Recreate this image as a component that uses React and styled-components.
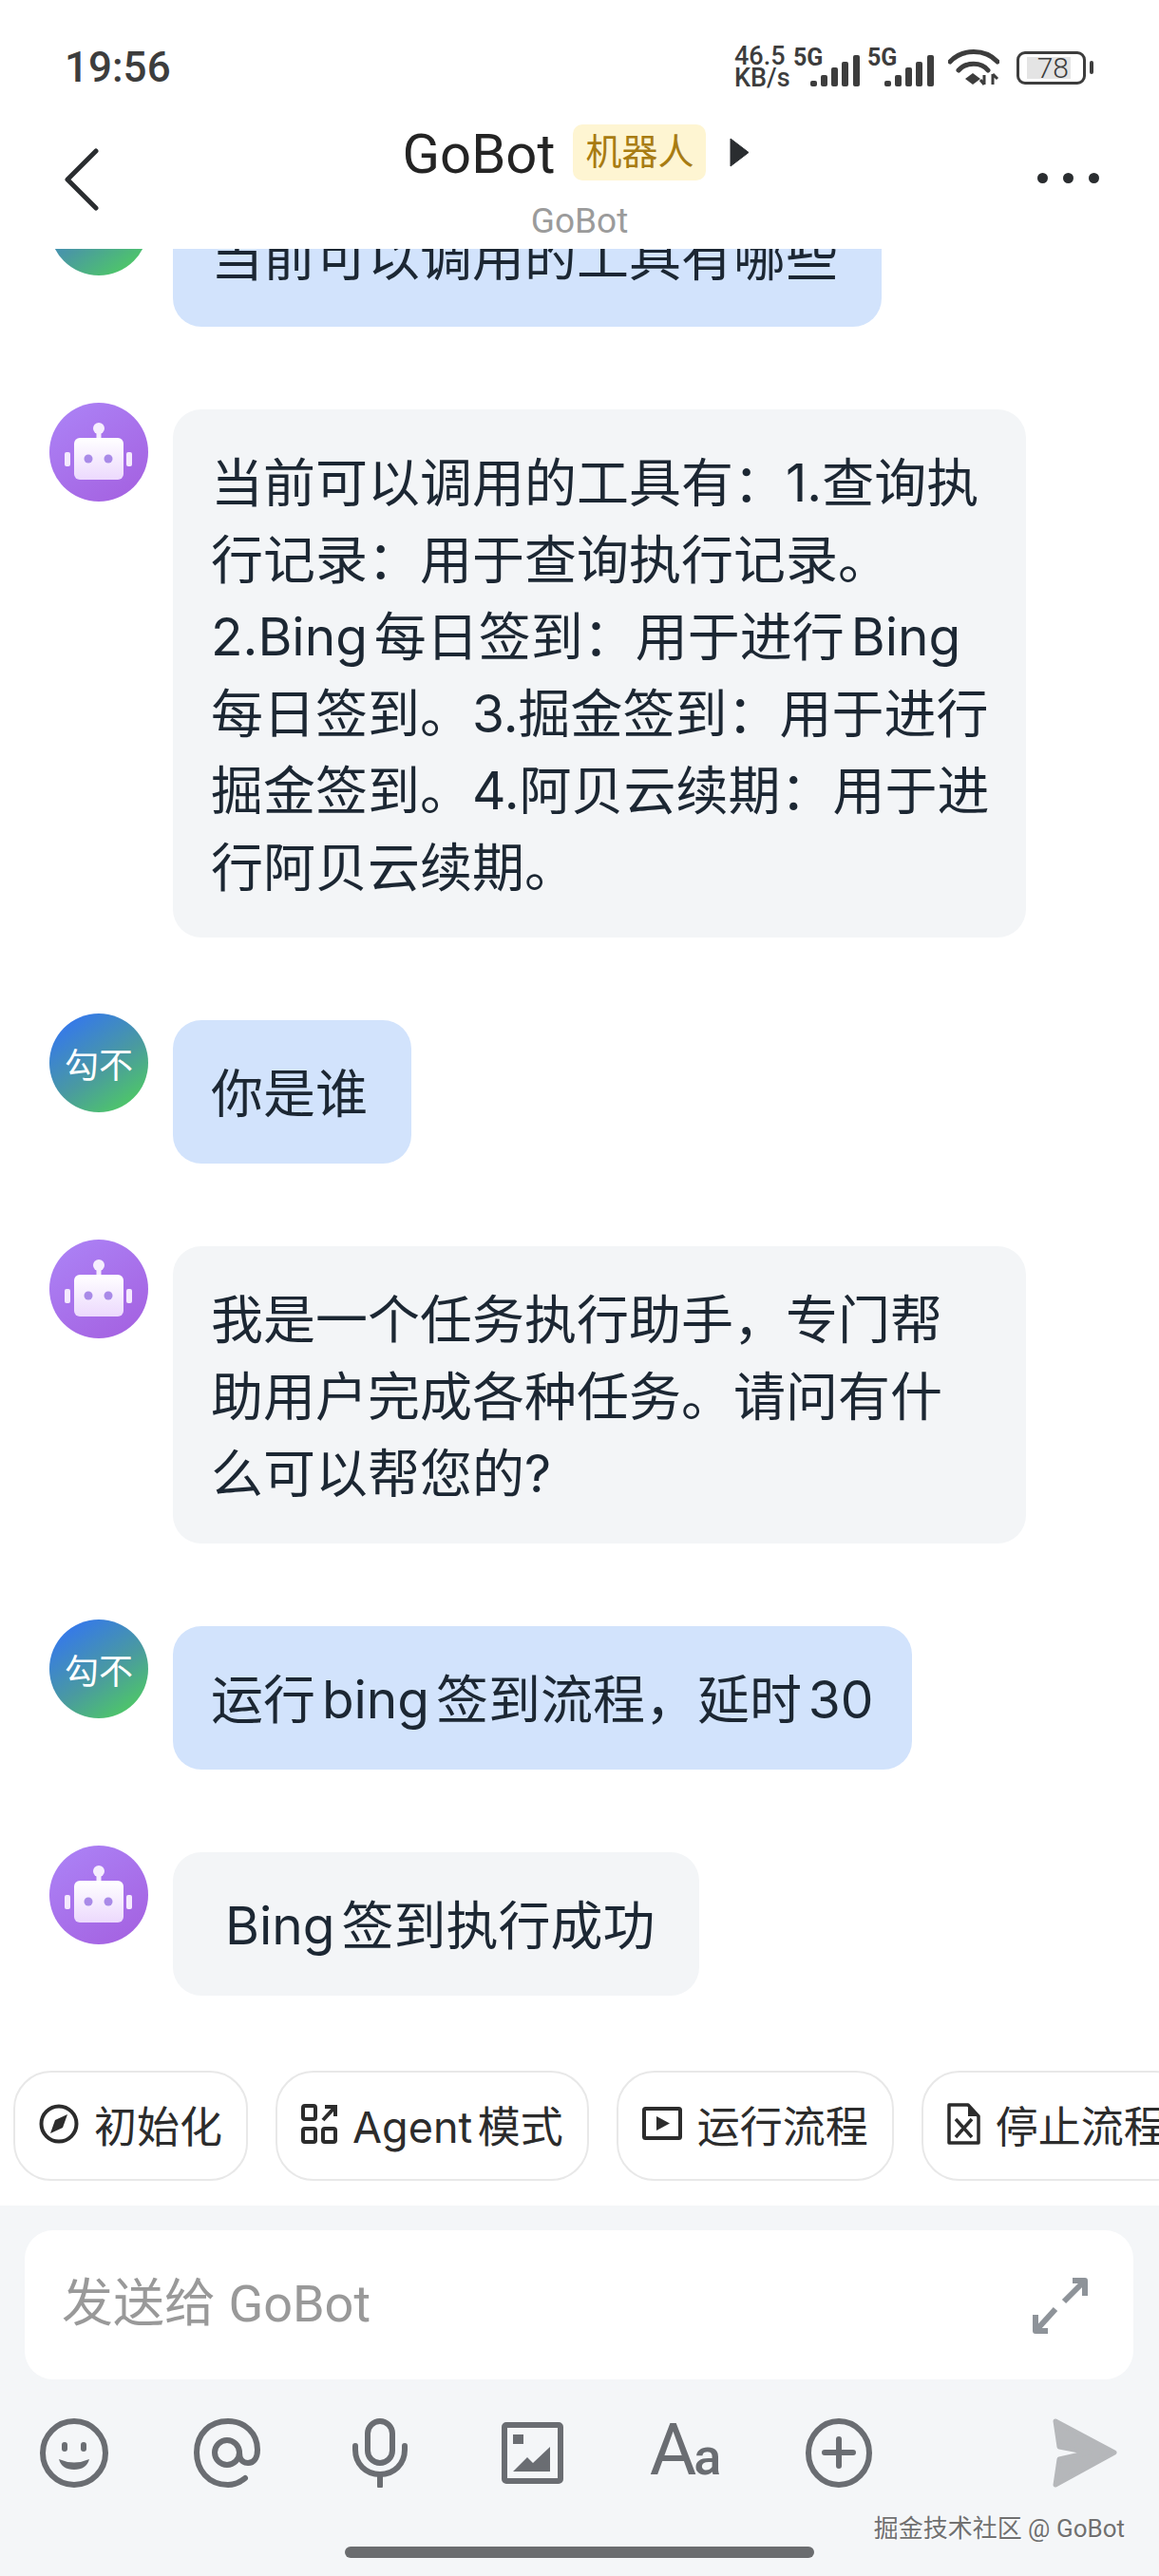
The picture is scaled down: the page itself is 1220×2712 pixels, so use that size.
import React from "react";
import styled, { createGlobalStyle } from "styled-components";

const GlobalStyle = createGlobalStyle`
  html, body {
    margin: 0;
    padding: 0;
    background: #fff;
  }
  * {
    box-sizing: border-box;
  }
`;

const FONT = `Roboto, "Noto Sans CJK SC", sans-serif`;
const BODY_FONT = `Inter, "Noto Sans CJK SC", sans-serif`;

const Page = styled.div`
  width: 1220px;
  height: 2712px;
  display: flex;
  flex-direction: column;
  position: relative;
  overflow: hidden;
  background: #fff;
  font-family: ${FONT};
  text-autospace: normal;
`;

const StatusBar = styled.div`
  height: 110px;
  flex: none;
  padding: 32px 69px 0 68px;
  display: flex;
  align-items: center;
  justify-content: space-between;
  color: #3d3d3d;
`;

const Time = styled.div`
  font-size: 44px;
  font-weight: 500;
  line-height: 50px;
`;

const StatusIcons = styled.div`
  display: flex;
  align-items: center;
`;

const Speed = styled.div`
  width: 62px;
  font-size: 27px;
  font-weight: 500;
  line-height: 23px;
`;

const Signal = styled.div`
  position: relative;
  width: 70px;
  height: 40px;
  margin-right: 8px;
  display: flex;
  justify-content: flex-end;
  align-items: flex-end;
`;

const SignalLabel = styled.span`
  position: absolute;
  left: 0;
  top: -3px;
  font-size: 25px;
  font-weight: 700;
  line-height: 25px;
`;

const WifiIcon = styled.svg`
  margin: 0 18px 0 7px;
`;

const Battery = styled.div`
  width: 73px;
  height: 35px;
  padding: 3px 8px;
  border: 3px solid #3d3d3d;
  border-radius: 9px;
  display: flex;
`;

const BatteryLevel = styled.div`
  width: 46px;
  padding-right: 2px;
  background: #e4e4e4;
  font-size: 30px;
  line-height: 24px;
  font-weight: 300;
  text-align: right;
`;

const BatteryNub = styled.div`
  width: 4px;
  height: 14px;
  margin-left: 4px;
  border-radius: 2px;
  background: #3d3d3d;
`;

const NavBar = styled.div`
  height: 152px;
  flex: none;
  display: grid;
  grid-template-columns: 1fr auto 1fr;
  align-items: start;
  padding: 0 63px;
  background: #fff;
`;

const BackIcon = styled.svg`
  margin: 46px 0 0 5px;
`;

const TitleBlock = styled.div`
  padding-top: 21px;
  display: flex;
  flex-direction: column;
  align-items: center;
`;

const TitleRow = styled.div`
  height: 59px;
  padding-right: 8px;
  display: flex;
  align-items: center;
`;

const TitleName = styled.div`
  font-size: 58px;
  line-height: 59px;
  padding-top: 3px;
  color: #242424;
  margin-right: 19px;
`;

const RobotBadge = styled.div`
  width: 140px;
  height: 59px;
  border-radius: 10px;
  background: #fef5d2;
  color: #a87c12;
  font-size: 38px;
  line-height: 59px;
  text-align: center;
`;

const TitleArrow = styled.svg`
  margin-left: 25px;
`;

const SubTitle = styled.div`
  margin-top: 25px;
  font-size: 37px;
  line-height: 36px;
  color: #9b9b9b;
`;

const MoreDots = styled.div`
  justify-self: end;
  margin-top: 72px;
  display: flex;
  gap: 16px;
`;

const Dot = styled.span`
  width: 11px;
  height: 11px;
  border-radius: 50%;
  background: #2a2d30;
`;

const ChatList = styled.div`
  flex: 1;
  min-height: 0;
  overflow: hidden;
  display: flex;
  flex-direction: column;
  justify-content: flex-end;
  gap: 80px;
  padding: 0 0 79px 52px;
`;

const Message = styled.div`
  flex: none;
  display: flex;
  align-items: flex-start;
  gap: 26px;
`;

const Avatar = styled.div`
  width: 104px;
  height: 104px;
  flex: none;
  border-radius: 50%;
  display: flex;
  align-items: center;
  justify-content: center;
  color: #fff;
  font-size: 36px;
  background: ${(p) =>
    p.$bot
      ? "linear-gradient(145deg, #ac84f7, #a45fdf)"
      : "linear-gradient(145deg, #3477ee 10%, #4a9aa0 55%, #4fd05c 95%)"};
`;

const Bubble = styled.div`
  margin-top: 7px;
  border-radius: 30px;
  padding: 37px ${(p) => p.$right}px 33px ${(p) => p.$left}px;
  width: ${(p) => (p.$long ? "898px" : "auto")};
  font-family: ${BODY_FONT};
  font-size: 55px;
  line-height: 81px;
  color: #1c2733;
  background: ${(p) => (p.$bot ? "#f3f5f7" : "#d2e3fc")};
`;

const ChipRow = styled.div`
  flex: none;
  height: 142px;
  padding-left: 14px;
  display: flex;
  align-items: flex-start;
  gap: 29px;
  overflow: hidden;
`;

const Chip = styled.div`
  flex: none;
  height: 116px;
  padding: 0 25px 4px;
  display: flex;
  align-items: center;
  gap: 16px;
  border: 2px solid #e8e8e8;
  border-radius: 40px;
  background: #fff;
  color: #2c2c2c;
  font-family: ${BODY_FONT};
  font-size: 45px;
  white-space: nowrap;
`;

const Panel = styled.div`
  flex: none;
  height: 390px;
  padding-top: 26px;
  background: #f4f6f8;
  display: flex;
  flex-direction: column;
`;

const InputBox = styled.div`
  height: 157px;
  margin: 0 27px 0 26px;
  padding: 0 48px 0 39px;
  border-radius: 30px;
  background: #fff;
  display: flex;
  align-items: center;
  justify-content: space-between;
`;

const Placeholder = styled.div`
  font-size: 54px;
  margin-bottom: 12px;
  color: #999;
`;

const Toolbar = styled.div`
  margin: 41px 44px 0 -3px;
  height: 73px;
  display: flex;
  align-items: center;
`;

const ToolCell = styled.div`
  width: 161px;
  display: flex;
  justify-content: center;
  align-items: center;
`;

const SendCell = styled.div`
  margin-left: auto;
  display: flex;
`;

const FontTool = styled.div`
  display: flex;
  align-items: baseline;
  color: #6a6d72;
  line-height: 73px;
  font-size: 76px;
`;

const FontToolSmall = styled.span`
  font-size: 54px;
  font-weight: 500;
  margin-left: -3px;
`;

const HomeBar = styled.div`
  width: 494px;
  height: 12px;
  margin: 62px auto 0;
  border-radius: 6px;
  background: #6a6c6f;
`;

const Watermark = styled.div`
  position: absolute;
  right: 36px;
  bottom: 33px;
  font-size: 26px;
  line-height: 34px;
  color: #707070;
  text-shadow: 1px 1px 0 #fff;
`;

const TOOL = "#6a6d72";

function SignalBars() {
  const bars = [
    [0, 6],
    [11, 12],
    [22, 20],
    [33, 26],
    [45, 33],
  ];
  return (
    <svg width="52" height="33" viewBox="0 0 52 33">
      {bars.map(([x, h]) => (
        <rect key={x} x={x} y={33 - h} width="7" height={h} rx="2" fill="#3d3d3d" />
      ))}
    </svg>
  );
}

function Wifi() {
  return (
    <WifiIcon width="54" height="40" viewBox="0 0 54 40" fill="none">
      <path d="M2 14 C15 0 39 0 52 14" stroke="#3d3d3d" strokeWidth="5" strokeLinecap="round" />
      <path d="M11 23 C19 14 35 14 42 23" stroke="#3d3d3d" strokeWidth="5" strokeLinecap="round" />
      <path d="M26 26 L34 32 L26 38 L18 32 Z" fill="#3d3d3d" />
      <path d="M38 28 V38 M34 33 L38 38 M47 38 V27 M47 27 L52 32" stroke="#3d3d3d" strokeWidth="3" />
    </WifiIcon>
  );
}

function RobotFace() {
  return (
    <svg width="104" height="104" viewBox="0 0 104 104">
      <defs>
        <linearGradient id="robotBody" x1="0" y1="0" x2="0" y2="1">
          <stop offset="0" stopColor="#ffffff" />
          <stop offset="1" stopColor="#ecd9fd" />
        </linearGradient>
      </defs>
      <circle cx="52" cy="27" r="6" fill="#f6eefe" />
      <rect x="49.5" y="28" width="5" height="11" fill="#f6eefe" />
      <rect x="26" y="37" width="52" height="44" rx="6" fill="url(#robotBody)" />
      <rect x="16" y="52" width="6" height="15" rx="2" fill="#f4e9fd" />
      <rect x="81" y="52" width="6" height="15" rx="2" fill="#f4e9fd" />
      <circle cx="41" cy="59" r="4.5" fill="#a98ae8" />
      <circle cx="62" cy="59" r="4.5" fill="#a98ae8" />
    </svg>
  );
}

function CompassIcon() {
  return (
    <svg width="42" height="42" viewBox="0 0 42 42" fill="none">
      <circle cx="21" cy="21" r="18.5" stroke="#2c2c2c" strokeWidth="4" />
      <path d="M30 11 L25 25 L12 31 L17 17 Z" fill="#2c2c2c" />
    </svg>
  );
}

function AgentIcon() {
  return (
    <svg width="38" height="44" viewBox="0 0 38 44" fill="none" stroke="#2c2c2c" strokeWidth="4">
      <rect x="2" y="3" width="13" height="14" rx="2" />
      <rect x="2" y="27" width="13" height="14" rx="2" />
      <rect x="23" y="27" width="13" height="14" rx="2" />
      <path d="M23 18 L35 5 M25 4 H36 V14" />
    </svg>
  );
}

function PlayIcon() {
  return (
    <svg width="42" height="36" viewBox="0 0 42 36" fill="none">
      <rect x="2" y="2" width="38" height="31" rx="1.5" stroke="#2c2c2c" strokeWidth="4" />
      <path d="M15 10 L29 17.5 L15 25 Z" fill="#2c2c2c" />
    </svg>
  );
}

function FileXIcon() {
  return (
    <svg width="35" height="44" viewBox="0 0 35 44" fill="none">
      <path d="M2 2 H22 L33 14 V42 H2 Z" stroke="#2c2c2c" strokeWidth="3.5" strokeLinejoin="round" />
      <path d="M22 2 V14 H33 Z" fill="#2c2c2c" />
      <path d="M9 17 L26 36 M26 17 L9 36" stroke="#2c2c2c" strokeWidth="3.5" />
    </svg>
  );
}

function ExpandIcon() {
  return (
    <svg width="58" height="60" viewBox="0 0 58 60" fill="none" stroke="#8e9399" strokeWidth="6" strokeLinejoin="round">
      <path d="M42 4 H55 V20" />
      <path d="M54 5 L33 26" />
      <path d="M3 40 V57 H16" />
      <path d="M4 56 L24 34" />
    </svg>
  );
}

function SmileIcon() {
  return (
    <svg width="72" height="73" viewBox="0 0 72 73" fill="none">
      <ellipse cx="36" cy="36.5" rx="33" ry="33.5" stroke={TOOL} strokeWidth="6" />
      <rect x="23" y="25" width="6" height="10" rx="3" fill={TOOL} />
      <rect x="43" y="25" width="6" height="10" rx="3" fill={TOOL} />
      <path d="M20 43 Q36 50 52 43 Q49 54 36 54 Q23 54 20 43 Z" fill={TOOL} />
    </svg>
  );
}

function AtIcon() {
  return (
    <svg width="70" height="73" viewBox="0 0 70 73" fill="none" stroke={TOOL} strokeWidth="6" strokeLinecap="round">
      <path d="M54 63 C48 68 42 70 36 70 C15 70 3 54 3 36 C3 16 17 3 36 3 C54 3 67 16 67 33 C67 42 63 47 57 47 C51 47 48 43 48 36" />
      <circle cx="35" cy="36" r="13" />
    </svg>
  );
}

function MicIcon() {
  return (
    <svg width="58" height="73" viewBox="0 0 58 73" fill="none" stroke={TOOL} strokeWidth="6" strokeLinecap="round">
      <rect x="16" y="3" width="26" height="44" rx="13" />
      <path d="M3 29 V33 C3 48 14 59 29 59 C44 59 55 48 55 33 V29" />
      <path d="M29 60 V71" />
    </svg>
  );
}

function ImageIcon() {
  return (
    <svg width="65" height="65" viewBox="0 0 65 65" fill="none">
      <rect x="3" y="3" width="59" height="59" rx="2" stroke={TOOL} strokeWidth="6" />
      <rect x="12" y="13" width="11" height="10" fill={TOOL} />
      <path d="M12 52 L27 37 L33 43 L51 26 V52 Z" fill={TOOL} />
    </svg>
  );
}

function PlusIcon() {
  return (
    <svg width="70" height="73" viewBox="0 0 70 73" fill="none" stroke={TOOL} strokeWidth="6" strokeLinecap="round">
      <ellipse cx="35" cy="36.5" rx="32" ry="33.5" />
      <path d="M20 36 H50 M35 22 V50" />
    </svg>
  );
}

function SendIcon() {
  return (
    <svg width="68" height="73" viewBox="0 0 68 73">
      <path
        d="M3 3 L65 36 L3 70 L7 43 L38 36 L7 30 Z"
        fill="#b5b7ba"
        stroke="#b5b7ba"
        strokeWidth="5"
        strokeLinejoin="round"
      />
    </svg>
  );
}

const messages = [
  { id: 1, left: 40, right: 46, text: "当前可以调用的工具有哪些" },
  {
    id: 2,
    bot: true,
    long: true,
    left: 40,
    right: 36,
    text: "当前可以调用的工具有：1.查询执行记录：用于查询执行记录。2.Bing每日签到：用于进行Bing每日签到。3.掘金签到：用于进行掘金签到。4.阿贝云续期：用于进行阿贝云续期。",
  },
  { id: 3, left: 40, right: 46, text: "你是谁" },
  {
    id: 4,
    bot: true,
    long: true,
    left: 40,
    right: 36,
    text: "我是一个任务执行助手，专门帮助用户完成各种任务。请问有什么可以帮您的?",
  },
  { id: 5, left: 40, right: 40, text: "运行bing签到流程，延时30" },
  { id: 6, bot: true, left: 55, right: 47, text: "Bing签到执行成功" },
];

const chips = [
  { label: "初始化", icon: <CompassIcon /> },
  { label: "Agent模式", icon: <AgentIcon /> },
  { label: "运行流程", icon: <PlayIcon /> },
  { label: "停止流程", icon: <FileXIcon /> },
];

const tools = [<SmileIcon />, <AtIcon />, <MicIcon />, <ImageIcon />];

export default function App() {
  return (
    <Page>
      <GlobalStyle />
      <StatusBar>
        <Time>19:56</Time>
        <StatusIcons>
          <Speed>
            46.5
            <br />
            KB/s
          </Speed>
          <Signal>
            <SignalLabel>5G</SignalLabel>
            <SignalBars />
          </Signal>
          <Signal>
            <SignalLabel>5G</SignalLabel>
            <SignalBars />
          </Signal>
          <Wifi />
          <Battery>
            <BatteryLevel>78</BatteryLevel>
          </Battery>
          <BatteryNub />
        </StatusIcons>
      </StatusBar>

      <NavBar>
        <BackIcon width="36" height="66" viewBox="0 0 36 66" fill="none" stroke="#2a2d30" strokeWidth="5" strokeLinecap="round" strokeLinejoin="round">
          <path d="M33 3 L3 33 L33 63" />
        </BackIcon>
        <TitleBlock>
          <TitleRow>
            <TitleName>GoBot</TitleName>
            <RobotBadge>机器人</RobotBadge>
            <TitleArrow width="20" height="31" viewBox="0 0 20 31">
              <path d="M1 1 L20 15.5 L1 30 Z" fill="#2a2d30" stroke="#2a2d30" strokeWidth="1" strokeLinejoin="round" />
            </TitleArrow>
          </TitleRow>
          <SubTitle>GoBot</SubTitle>
        </TitleBlock>
        <MoreDots>
          <Dot />
          <Dot />
          <Dot />
        </MoreDots>
      </NavBar>

      <ChatList>
        {messages.map((m) => (
          <Message key={m.id}>
            <Avatar $bot={m.bot}>{m.bot ? <RobotFace /> : "勾不"}</Avatar>
            <Bubble $bot={m.bot} $long={m.long} $left={m.left} $right={m.right}>
              {m.text}
            </Bubble>
          </Message>
        ))}
      </ChatList>

      <ChipRow>
        {chips.map((c) => (
          <Chip key={c.label}>
            {c.icon}
            <span>{c.label}</span>
          </Chip>
        ))}
      </ChipRow>

      <Panel>
        <InputBox>
          <Placeholder>发送给 GoBot</Placeholder>
          <ExpandIcon />
        </InputBox>
        <Toolbar>
          {tools.map((icon, i) => (
            <ToolCell key={i}>{icon}</ToolCell>
          ))}
          <ToolCell>
            <FontTool>
              A<FontToolSmall>a</FontToolSmall>
            </FontTool>
          </ToolCell>
          <ToolCell>
            <PlusIcon />
          </ToolCell>
          <SendCell>
            <SendIcon />
          </SendCell>
        </Toolbar>
        <HomeBar />
      </Panel>

      <Watermark>掘金技术社区 @ GoBot</Watermark>
    </Page>
  );
}
